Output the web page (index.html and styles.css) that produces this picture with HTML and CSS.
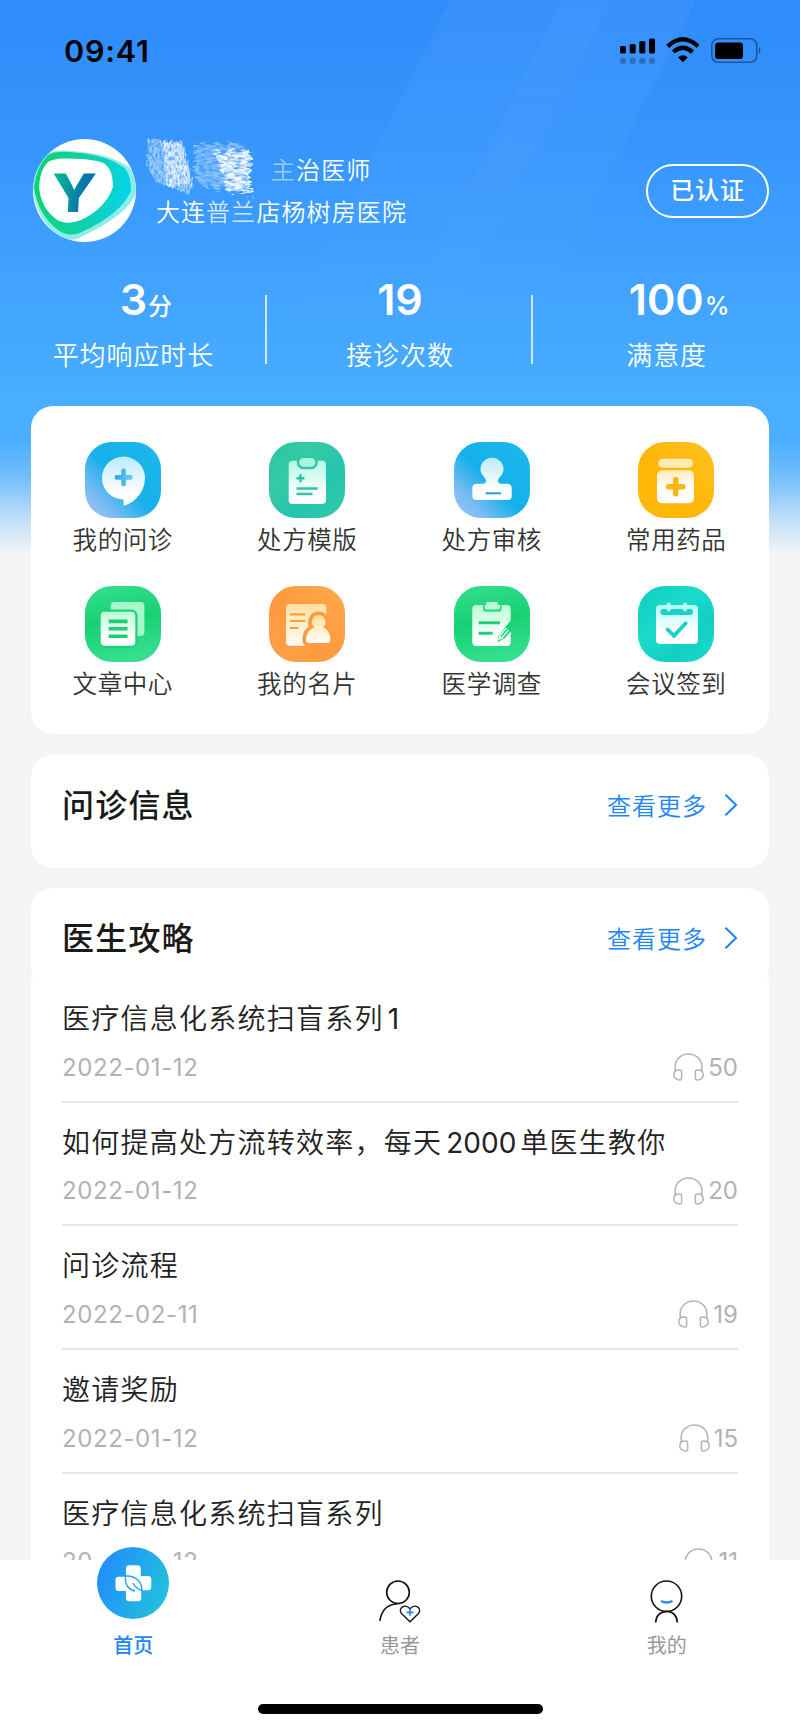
FILE: index.html
```html
<!DOCTYPE html>
<html lang="zh-CN">
<head>
<meta charset="utf-8">
<meta name="viewport" content="width=device-width">
<title>首页</title>
<link rel="stylesheet" href="styles.css">
</head>
<body>
<svg class="defs" width="0" height="0" aria-hidden="true">
  <defs>
    <linearGradient id="bgSky" x1="0" y1="1" x2="1" y2="0"><stop offset="0" stop-color="#9cc4f8"/><stop offset=".2" stop-color="#7ebcf4"/><stop offset=".48" stop-color="#16b0ea"/><stop offset="1" stop-color="#1cb8ee"/></linearGradient>
    <linearGradient id="bgTeal" x1="0" y1="0" x2="1" y2="1"><stop offset="0" stop-color="#2fc4a6"/><stop offset=".35" stop-color="#33caa4"/><stop offset=".65" stop-color="#26c5b0"/><stop offset="1" stop-color="#35cba4"/></linearGradient>
    <linearGradient id="bgGold" x1="1" y1="0" x2="0" y2="1"><stop offset="0" stop-color="#ffc11f"/><stop offset=".6" stop-color="#ffb606"/><stop offset="1" stop-color="#ffb90a"/></linearGradient>
    <linearGradient id="bgGreen" x1=".1" y1="0" x2=".3" y2="1"><stop offset="0" stop-color="#33df8e"/><stop offset=".5" stop-color="#18d074"/><stop offset="1" stop-color="#34df8f"/></linearGradient>
    <linearGradient id="bgOrange" x1="1" y1="0" x2="0" y2="1"><stop offset="0" stop-color="#ffab4d"/><stop offset=".5" stop-color="#ff9a3e"/><stop offset="1" stop-color="#ffa145"/></linearGradient>
    <linearGradient id="bgAqua" x1="0" y1="0" x2="1" y2="1"><stop offset="0" stop-color="#0bcdc3"/><stop offset=".4" stop-color="#1bdcca"/><stop offset=".7" stop-color="#10cfc4"/><stop offset="1" stop-color="#1bdccb"/></linearGradient>
    <linearGradient id="fgSky" x1="0" y1="0" x2="0" y2="1"><stop offset="0" stop-color="#bdeafd"/><stop offset=".75" stop-color="#fff"/></linearGradient>
    <linearGradient id="fgMint" x1="0" y1="0" x2="0" y2="1"><stop offset="0" stop-color="#b5fae2"/><stop offset=".8" stop-color="#fff"/></linearGradient>
    <linearGradient id="fgGreen" x1="0" y1="0" x2="0" y2="1"><stop offset="0" stop-color="#b9fdd5"/><stop offset=".75" stop-color="#fff"/></linearGradient>
    <linearGradient id="fgCream" x1="0" y1="0" x2="0" y2="1"><stop offset="0" stop-color="#ffe2a1"/><stop offset="1" stop-color="#fffdf7"/></linearGradient>
    <linearGradient id="fgJar" x1="0" y1="0" x2="0" y2="1"><stop offset="0" stop-color="#ffecb8"/><stop offset=".5" stop-color="#fff"/></linearGradient>
    <linearGradient id="fgAqua" x1="0" y1="0" x2="0" y2="1"><stop offset="0" stop-color="#b4fbf3"/><stop offset=".7" stop-color="#fff"/></linearGradient>
    <linearGradient id="plusSky" x1="0" y1="0" x2="1" y2="0"><stop offset="0" stop-color="#1fa9e6"/><stop offset="1" stop-color="#7cc9f1"/></linearGradient>
    <symbol id="tile" viewBox="0 0 76 76"><rect width="76" height="76" rx="27"/></symbol>
    <symbol id="headphones" viewBox="0 0 31 28">
      <g fill="none" stroke="#b4b4b4" stroke-width="1.500" stroke-linejoin="round">
        <path d="M2.200 19V13.600C2.200 6.500 8 1 15.500 1S28.800 6.500 28.800 13.600V19"/>
        <path d="M8.600 18.500v6.800c0 1.200-.9 1.800-2.100 1.600C3 26.400.8 24.500.8 22 .8 19 2.800 17 6.200 17 7.800 17 8.600 17.600 8.600 18.500z"/>
        <path d="M22.400 18.500v6.800c0 1.200.9 1.800 2.100 1.600 3.500-.5 5.700-2.400 5.700-4.900 0-3-2-5-5.400-5-1.600 0-2.400.6-2.400 1.500z"/>
      </g>
    </symbol>
    <symbol id="chevron" viewBox="0 0 14 24"><path d="M1.500 1.700 12 12 1.500 22.300" fill="none" stroke="#2285f5" stroke-width="2.100"/></symbol>
  </defs>
</svg>

<main class="screen">
  <svg class="rays" viewBox="0 0 800 400" aria-hidden="true">
    <defs>
      <linearGradient id="ray" gradientUnits="userSpaceOnUse" x1="0" y1="0" x2="0" y2="340"><stop offset="0" stop-color="#fff" stop-opacity=".045"/><stop offset="1" stop-color="#fff" stop-opacity="0"/></linearGradient>
    </defs>
    <path d="M450 0H696L526 340H280Z" fill="url(#ray)"/>
    <path d="M562 0H612L442 340H392Z" fill="url(#ray)" fill-opacity=".7"/>
  </svg>

  <header class="status">
    <span class="clock">09:41</span>
    <svg width="146" height="30" viewBox="0 0 146 30" aria-hidden="true">
      <rect x="4" y="10" width="6" height="7.500" rx="1.500"/><rect x="13.700" y="8" width="6" height="9.500" rx="1.500"/><rect x="23.300" y="5" width="6" height="12.500" rx="1.500"/><rect x="33" y="2.500" width="6" height="15" rx="1.500"/>
      <g fill-opacity=".25"><rect x="4" y="21.800" width="6" height="6" rx="1.800"/><rect x="13.700" y="21.800" width="6" height="6" rx="1.800"/><rect x="23.300" y="21.800" width="6" height="6" rx="1.800"/><rect x="33" y="21.800" width="6" height="6" rx="1.800"/></g>
      <g fill="none" stroke="#000" stroke-width="4.300"><path d="M51.800 10.300Q66.800-3.600 82 10.300"/><path d="M57.300 16Q66.800 7.700 76.500 16"/></g>
      <path d="M62 21.200Q66.900 17.300 71.800 21.200L66.900 26.300Z"/>
      <rect x="95.800" y="2.800" width="45" height="23.500" rx="6.500" fill="none" stroke="#000" stroke-opacity=".4" stroke-width="1.600"/>
      <rect x="99" y="6.500" width="28" height="16.500" rx="3"/><path d="M143 11Q146 14.500 143 18Z" fill-opacity=".45"/>
    </svg>
  </header>

  <section class="profile">
    <svg class="avatar" viewBox="0 0 103 103" role="img" aria-label="头像">
      <defs>
        <linearGradient id="swirl" x1="0" y1=".4" x2="1" y2=".5"><stop offset="0" stop-color="#08d66e"/><stop offset=".5" stop-color="#13d0a5"/><stop offset="1" stop-color="#05d4ec"/></linearGradient>
        <linearGradient id="mark" x1="0" y1="0" x2="1" y2=".2"><stop offset=".1" stop-color="#05bd90"/><stop offset=".8" stop-color="#0872ad"/></linearGradient>
        <clipPath id="disc"><circle cx="51.500" cy="51.500" r="51.500"/></clipPath>
      </defs>
      <g clip-path="url(#disc)">
        <rect width="103" height="103" fill="#fff"/>
        <path d="M14 16Q20 10 38 12Q72 14 91 25Q104 31 103 53Q98 74 48 98Q36 105 22 94Q2 77 0 48Q2 27 14 16Z" fill="#8deee7"/>
        <path d="M14 17Q20 12 36 13Q70 15 87 26Q98 31 98 52Q88 75 49 93Q36 99 25 91Q5 76 1 48Q4 27 14 17Z" fill="url(#swirl)"/>
        <path d="M14 24Q18 19 36 19.500Q64 20 72 25Q80 31 80 48Q73 69 48 81Q33 87 23 80Q8 69 6 48Q7 31 14 24Z" fill="#fff"/>
        <text class="mark" x="18" y="73" transform="translate(3 0) skewX(-3)" textLength="45" lengthAdjust="spacingAndGlyphs" fill="url(#mark)">Y</text>
      </g>
    </svg>
    <div class="who">
      <div class="role"><span class="worn">主</span>治医师</div>
      <div class="hospital">大连<span class="worn-part">普兰</span>店杨树房医院</div>
      <svg class="scribble" viewBox="0 0 150 72" aria-hidden="true">
        <defs>
          <filter id="chalkA" x="-10%" y="-10%" width="120%" height="120%">
            <feTurbulence type="fractalNoise" baseFrequency=".5 .22" numOctaves="3" seed="4" result="n"/>
            <feColorMatrix in="n" type="matrix" values="0 0 0 0 1  0 0 0 0 1  0 0 0 0 1  2.200 0 0 0 -.4" result="g"/>
            <feDisplacementMap in="SourceGraphic" in2="n" scale="8" result="d"/>
            <feComposite in="d" in2="g" operator="in"/>
            <feGaussianBlur stdDeviation=".6"/>
          </filter>
          <filter id="chalkB" x="-10%" y="-10%" width="120%" height="120%">
            <feTurbulence type="fractalNoise" baseFrequency=".14 .42" numOctaves="3" seed="9" result="n"/>
            <feColorMatrix in="n" type="matrix" values="0 0 0 0 1  0 0 0 0 1  0 0 0 0 1  2.200 0 0 0 -.4" result="g"/>
            <feDisplacementMap in="SourceGraphic" in2="n" scale="14" result="d"/>
            <feComposite in="d" in2="g" operator="in"/>
            <feGaussianBlur stdDeviation=".6"/>
          </filter>
        </defs>
        <g fill="#fff">
          <path d="M6 5 41 7 51 50 47 60 14 48 5 32Z" fill-opacity=".5" filter="url(#chalkA)"/>
          <path d="M21 8 40 9 51 50 25 52Z" fill-opacity=".7" filter="url(#chalkA)"/>
          <path d="M53 10 95 9 108 15 108 60 62 53 52 43Z" fill-opacity=".4" filter="url(#chalkB)"/>
          <path d="M72 18 108 17 109 60 84 57 80 40Z" fill-opacity=".9" filter="url(#chalkB)"/>
        </g>
      </svg>
    </div>
    <span class="badge">已认证</span>
  </section>

  <section class="stats">
    <div class="stat"><div class="num with-unit">3<small class="unit-cn">分</small></div><div class="cap">平均响应时长</div></div>
    <div class="stat"><div class="num">19</div><div class="cap">接诊次数</div></div>
    <div class="stat"><div class="num with-unit">100<small>%</small></div><div class="cap">满意度</div></div>
  </section>

  <section class="card menu">
    <a class="item"><svg viewBox="0 0 76 76"><use href="#tile" fill="url(#bgSky)"/><path d="M38.500 57.500A21.500 21.500 0 1 1 60 36C60 49 51 60 39.300 63.700 38.500 64 38.500 63 38.500 62Z" fill="url(#fgSky)"/><path d="M38.600 26.200a2.300 2.300 0 0 1 2.300 2.300V33H45.500a2.300 2.300 0 0 1 0 4.800H40.900V42a2.300 2.300 0 0 1-4.600 0V37.800H32a2.300 2.300 0 0 1 0-4.800H36.300V28.500a2.300 2.300 0 0 1 2.300-2.300Z" fill="url(#plusSky)"/></svg>我的问诊</a>
    <a class="item"><svg viewBox="0 0 76 76"><use href="#tile" fill="url(#bgTeal)"/><rect x="19.700" y="18.700" width="37.300" height="43.300" rx="4" fill="url(#fgMint)"/><rect x="29" y="14.700" width="18.600" height="11.300" rx="5.500" fill="#a9f6de" stroke="#30c6a7" stroke-width="2.400"/><g fill="none" stroke="#2fc3a8" stroke-width="2.500"><path d="M31.500 32.300v8M27.500 36.300h8M27.500 46.600H48.700M27.500 52H43.500"/></g></svg>处方模版</a>
    <a class="item"><svg viewBox="0 0 76 76"><use href="#tile" fill="url(#bgSky)"/><path d="M38 15.700a11.500 11.500 0 0 1 11.500 11.500C49.500 33 44.500 35 44 38.500 44 40.500 45 41.500 47 41.700H53.500a4.200 4.200 0 0 1 4.200 4.200V54a4 4 0 0 1-4 4H22.300a4 4 0 0 1-4-4V45.900a4.200 4.200 0 0 1 4.200-4.200H29C31 41.500 32 40.500 32 38.500 31.500 35 26.500 33 26.500 27.200A11.500 11.500 0 0 1 38 15.700Z" fill="url(#fgSky)"/><path d="M31.700 51.300H47" stroke="#229bdc" stroke-width="2"/></svg>处方审核</a>
    <a class="item"><svg viewBox="0 0 76 76"><use href="#tile" fill="url(#bgGold)"/><rect x="20.300" y="16.700" width="34.700" height="9" rx="4.500" fill="#ffebb2"/><rect x="19" y="28.300" width="37" height="33" rx="5" fill="url(#fgJar)"/><path d="M37.700 37.500v14.400M30.500 44.700h14.400" stroke="#fdb515" stroke-width="5.400" stroke-linecap="round"/></svg>常用药品</a>
    <a class="item"><svg viewBox="0 0 76 76"><use href="#tile" fill="url(#bgGreen)"/><rect x="25.700" y="16" width="33.700" height="34" rx="4" fill="#a8f8c9"/><rect x="14.600" y="24.600" width="36.800" height="36.200" rx="5" fill="url(#fgGreen)" stroke="#1dd379" stroke-width="2.200"/><path d="M23.700 35.400H42.500M23.700 42.700H42.500M23.700 50.300H42.500" stroke="#1ccf76" stroke-width="3.600"/></svg>文章中心</a>
    <a class="item"><svg viewBox="0 0 76 76"><use href="#tile" fill="url(#bgOrange)"/><rect x="17" y="18" width="40.300" height="41.700" rx="4" fill="url(#fgCream)"/><path d="M21 28.300H36.300M21 35H36.300M21 42H29.500" stroke="#ffa040" stroke-width="2.200"/><path d="M49.700 29.300a6.700 6.700 0 0 1 4.200 12C59.500 43.500 61.500 49 61.300 54c0 2-1.500 3-3.300 3H40c-1.800 0-3-1-3-3 0-5.500 2.800-10.500 8.500-12.700a6.700 6.700 0 0 1 4.200-12Z" fill="url(#fgCream)" stroke="#ff9c3f" stroke-width="7.500" paint-order="stroke"/></svg>我的名片</a>
    <a class="item"><svg viewBox="0 0 76 76"><use href="#tile" fill="url(#bgGreen)"/><rect x="18.300" y="19" width="38.400" height="41" rx="4" fill="url(#fgGreen)"/><path d="M29 17V22.700a3 3 0 0 0 3 3H44.600a3 3 0 0 0 3-3V17" fill="#2bda85"/><path d="M32.300 16H43.700V19H46V21.500a2 2 0 0 1-2 2H32.700a2 2 0 0 1-2-2V19H32.300Z" fill="#b9fdd5"/><path d="M24.700 36.800H46M24.700 47.200H38.700" stroke="#1fd07a" stroke-width="3"/><path d="M57 34 44 50.500V56L51 52 57 45Z" fill="#1ad174"/><path d="M45 49.500 52 41.500 55 44.500 48.500 52.500 44 54.500Z" fill="#dcffeb"/><path d="M47 50.500 53.500 43" stroke="#1ad174" stroke-width="1.300"/></svg>医学调查</a>
    <a class="item"><svg viewBox="0 0 76 76"><use href="#tile" fill="url(#bgAqua)"/><rect x="18" y="19" width="42" height="39" rx="4" fill="url(#fgAqua)"/><rect x="22.300" y="23" width="32.700" height="6" rx="3" fill="#19d3c6"/><path d="M30.700 18.500v5M47 18.500v5" stroke="#bcfbf4" stroke-width="4" stroke-linecap="round"/><path d="M29.600 43.500 36 49.700 47.700 37.300" fill="none" stroke="#17d2c4" stroke-width="3.800" stroke-linecap="round"/></svg>会议签到</a>
  </section>

  <section class="card head consult"><h2>问诊信息</h2><a class="more">查看更多<svg><use href="#chevron"/></svg></a></section>

  <section class="guide">
    <div class="card head"><h2>医生攻略</h2><a class="more">查看更多<svg><use href="#chevron"/></svg></a></div>
    <ul class="list">
      <li><h3>医疗信息化系统扫盲系列<span class="d">1</span></h3><div class="meta"><time>2022-01-12</time><span class="plays"><svg><use href="#headphones"/></svg>50</span></div></li>
      <li><h3>如何提高处方流转效率，每天<span class="d">2000</span>单医生教你</h3><div class="meta"><time>2022-01-12</time><span class="plays"><svg><use href="#headphones"/></svg>20</span></div></li>
      <li><h3>问诊流程</h3><div class="meta"><time>2022-02-11</time><span class="plays"><svg><use href="#headphones"/></svg>19</span></div></li>
      <li><h3>邀请奖励</h3><div class="meta"><time>2022-01-12</time><span class="plays"><svg><use href="#headphones"/></svg>15</span></div></li>
      <li><h3>医疗信息化系统扫盲系列</h3><div class="meta"><time>2022-01-12</time><span class="plays"><svg><use href="#headphones"/></svg>11</span></div></li>
    </ul>
  </section>
</main>

<nav class="tabs">
  <div class="tabrow">
    <a class="tab on">
      <svg class="home" viewBox="0 0 72 72">
        <defs><linearGradient id="homeBg" x1="0" y1=".3" x2="1" y2=".7"><stop offset="0" stop-color="#228dfc"/><stop offset="1" stop-color="#21c2dc"/></linearGradient></defs>
        <circle cx="36" cy="36" r="36" fill="url(#homeBg)"/>
        <path d="M32.300 18.300H40.500a3.300 3.300 0 0 1 3.300 3.300V29H51a3.300 3.300 0 0 1 3.300 3.300V40A3.300 3.300 0 0 1 51 43.300H44.300V51a3.300 3.300 0 0 1-3.300 3.300H32.300A3.300 3.300 0 0 1 29 51V44H21.800a3.300 3.300 0 0 1-3.300-3.300V33a3.300 3.300 0 0 1 3.300-3.300H29V21.600a3.300 3.300 0 0 1 3.300-3.300Z" fill="#fff"/>
        <path d="M28.500 29C27.500 38 32 43 38 44M28.500 29C39 28.500 45.500 35 44.800 44.500M36 36C38 41 42 42 44.500 43.500" fill="none" stroke="#25a4ec" stroke-width="1.400"/>
      </svg>首页</a>
    <a class="tab">
      <svg class="line" viewBox="0 0 44 44" fill="none" stroke="#111" stroke-width="1.600"><circle cx="20" cy="12.300" r="11.300"/><path d="M1.800 41C3.500 30 10 24.300 19 24"/><path d="M32 41.800 23.500 33.500C19.500 28.500 26.500 23 32 28.700 37.500 23 44.500 28.500 40.500 33.500Z" stroke-width="1.300"/><path d="M32 28.800v7M28.500 32.300h7" stroke="#2b86f4" stroke-width="1.800"/></svg>患者</a>
    <a class="tab">
      <svg class="line" viewBox="0 0 44 44" fill="none" stroke="#111" stroke-width="1.600"><circle cx="21.500" cy="16.200" r="15.200"/><path d="M10.700 42.500C10.900 36 15 32 21.500 31.500S32 36 32.300 42.500"/><path d="M16 21Q21.500 24 27.500 21" stroke="#2b86f4" stroke-width="2.400"/></svg>我的</a>
  </div>
  <div class="grip"></div>
</nav>
</body>
</html>
```
FILE: styles.css
```css
* { box-sizing: border-box; }

body {
  margin: 0;
  width: 800px;
  height: 1731px;
  display: flex;
  flex-direction: column;
  overflow: hidden;
  background: #fff;
  font-family: Inter, "Noto Sans CJK SC", sans-serif;
  color: #333;
}

.defs { position: absolute; }
svg { display: block; flex: none; }
h2, h3, ul { margin: 0; padding: 0; }

.screen {
  position: relative;
  height: 1560px;
  flex: none;
  overflow: hidden;
  background: linear-gradient(#2e8bfc 0, #3796fc 150px, #40a1ff 270px, #48aeff 400px, #4aafff 440px, #70bdfb 475px, #b9dcf9 515px, #f5f5f5 555px);
}

/* slanted light beams behind the header */
.rays { position: absolute; left: 0; top: 0; width: 800px; height: 400px; }

.status {
  position: relative;
  height: 139px;
  padding: 36px 38px 0 64px;
  display: flex;
  justify-content: space-between;
  align-items: flex-start;
}
.clock { font-size: 30.500px; font-weight: 600; line-height: 30px; letter-spacing: .8px; color: #000; }

.profile {
  position: relative;
  height: 103px;
  padding: 0 31px 0 33px;
  display: flex;
  align-items: center;
}
.avatar { width: 103px; height: 103px; }
.mark { font: 800 53px Inter, sans-serif; }
.who { position: relative; flex: 1; padding: 2px 0 0 20px; color: #fff; font-size: 24px; font-weight: 350; letter-spacing: 1.100px; }
.role { height: 42px; line-height: 42px; padding-left: 115px; }
.hospital { height: 42px; line-height: 42px; }
.worn { opacity: .5; }
.worn-part { opacity: .75; }
.scribble { position: absolute; left: 6px; top: -14px; width: 150px; height: 72px; }
.badge {
  width: 123px;
  height: 54px;
  border: 2px solid #fff;
  border-radius: 27px;
  line-height: 49px;
  text-align: center;
  color: #fff;
  font-size: 24px;
  font-weight: 500;
  letter-spacing: .8px;
}

.stats {
  position: relative;
  height: 164px;
  display: grid;
  grid-template-columns: repeat(3, 1fr);
  color: #fff;
  text-align: center;
}
.stat {
  padding-top: 31px;
  background: linear-gradient(rgba(255,255,255,.75), rgba(255,255,255,.75)) right 53px / 2px 69px no-repeat;
}
.stat:last-child { background: none; }
.num { height: 52px; line-height: 52px; font-size: 43px; font-weight: 600; }
.with-unit { padding-left: 25px; }
.num small { font-size: 25px; font-weight: 500; margin-left: 1px; }
.num .unit-cn { font-size: 24px; }
.cap { margin-top: 12px; line-height: 38px; font-size: 26px; font-weight: 350; letter-spacing: .9px; }

.card { background: #fff; border-radius: 22px; margin: 0 31px; }

.menu {
  position: relative;
  height: 328px;
  padding-top: 36px;
  display: grid;
  grid-template-columns: repeat(4, 1fr);
  grid-auto-rows: 144px;
}
.item { display: flex; flex-direction: column; align-items: center; padding-right: 1px; font-size: 24.500px; font-weight: 350; line-height: 36px; letter-spacing: .6px; color: #333; }
.item svg { width: 76px; height: 76px; margin-bottom: 4px; }

.head { display: flex; justify-content: space-between; align-items: flex-start; padding: 27px 31px 0 31px; height: 113px; }
.consult { margin-top: 21px; }
.head h2 { font-size: 32px; line-height: 48px; font-weight: 500; letter-spacing: 1.200px; color: #1a1a1a; }
.more { display: flex; align-items: center; height: 45px; font-size: 24px; font-weight: 350; letter-spacing: 1px; color: #2285f5; }
.more svg { width: 14px; height: 24px; margin-left: 17px; }

.guide { margin-top: 20px; }
.guide .head { height: 102px; }
.list { position: relative; list-style: none; margin: -11px 31px 0; padding: 0 31px; background: #fff; }
.list li { height: 123.700px; padding-top: 18px; border-bottom: 2px solid #e5e5e5; }
.list h3 { font-size: 28px; line-height: 44px; font-weight: 350; letter-spacing: 1.250px; color: #222; white-space: nowrap; }
.d { margin: 0 4px; letter-spacing: 0; font-weight: 400; }
.meta { display: flex; justify-content: space-between; align-items: center; height: 32px; margin-top: 10px; font-size: 24px; color: #b2b2b2; }
.meta time { letter-spacing: .600px; }
.plays { display: flex; align-items: center; gap: 4px; }
.plays svg { width: 31px; height: 28px; }

.tabs { position: relative; flex: 1; background: #fff; }
.tabrow { display: grid; grid-template-columns: repeat(3, 1fr); height: 144px; }
.tab { display: flex; flex-direction: column; align-items: center; font-size: 20px; line-height: 30px; color: #999; }
.tab.on { color: #2285f5; font-weight: 500; }
.home { width: 82px; height: 72px; padding: 0 5px; margin: -13px 0 12px; background: #fff; }
.line { width: 44px; height: 44px; margin: 20px 0 7px; }
.grip { width: 285px; height: 10px; margin: 0 auto; border-radius: 5px; background: #000; }
```
